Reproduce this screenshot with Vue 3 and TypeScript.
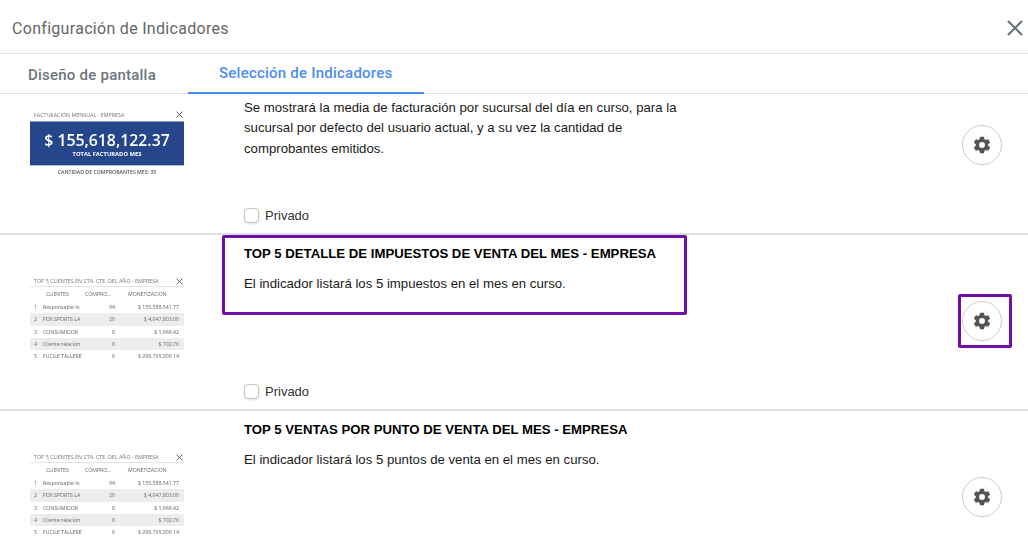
<script setup lang="ts">
interface TableRow {
  name: string
  qty: string
  amount: string
}

interface Indicator {
  id: number
  title: string
  lines: string[]
  kind: 'total' | 'table'
  showPrivado: boolean
}

const tableRows: TableRow[] = [
  { name: 'Responsable In', qty: '94', amount: '$ 155,588,541.77' },
  { name: 'FOX SPORTS LA', qty: '20', amount: '$ 4,047,803.00' },
  { name: 'CONSUMIDOR', qty: '8', amount: '$ 1,968.42' },
  { name: 'Cliente relacion', qty: '8', amount: '$ 702.76' },
  { name: 'FUCILE TALLERE', qty: '6', amount: '$ 298,769,309.14' }
]

// el titulo del primero queda fuera de la zona visible
const indicators: Indicator[] = [
  {
    id: 1,
    title: '',
    lines: [
      'Se mostrará la media de facturación por sucursal del día en curso, para la',
      'sucursal por defecto del usuario actual, y a su vez la cantidad de',
      'comprobantes emitidos.'
    ],
    kind: 'total',
    showPrivado: true
  },
  {
    id: 2,
    title: 'TOP 5 DETALLE DE IMPUESTOS DE VENTA DEL MES - EMPRESA',
    lines: ['El indicador listará los 5 impuestos en el mes en curso.'],
    kind: 'table',
    showPrivado: true
  },
  {
    id: 3,
    title: 'TOP 5 VENTAS POR PUNTO DE VENTA DEL MES - EMPRESA',
    lines: ['El indicador listará los 5 puntos de venta en el mes en curso.'],
    kind: 'table',
    showPrivado: false
  }
]
</script>

<template>
  <div class="modal">
    <header class="modal-header">
      <span class="modal-title">Configuración de Indicadores</span>
      <svg class="close" width="16" height="16" viewBox="0 0 16 16">
        <path d="M1 1 15 15M15 1 1 15" stroke="#6c757d" stroke-width="2.2" fill="none" />
      </svg>
    </header>

    <nav class="tabs">
      <div class="tab">Diseño de pantalla</div>
      <div class="tab active">Selección de Indicadores</div>
    </nav>

    <div class="viewport">
      <div class="list">
        <section v-for="item in indicators" :key="item.id" class="row">
          <div class="thumb-col">
            <div v-if="item.kind === 'total'" class="thumb thumb-total">
              <div class="thumb-head">
                <span>FACTURACIÓN MENSUAL - EMPRESA</span>
                <svg width="7" height="7" viewBox="0 0 7 7">
                  <path d="M.5.5l6 6M6.5.5l-6 6" stroke="#666" stroke-width="1" fill="none" />
                </svg>
              </div>
              <div class="total-box">
                <div class="total-value">$ 155,618,122.37</div>
                <div class="total-label">TOTAL FACTURADO MES</div>
              </div>
              <div class="total-foot">CANTIDAD DE COMPROBANTES MES: 35</div>
            </div>
            <div v-else class="thumb thumb-table">
              <div class="thumb-head">
                <span>TOP 5 CLIENTES EN CTA. CTE. DEL AÑO - EMPRESA</span>
                <svg width="7" height="7" viewBox="0 0 7 7">
                  <path d="M.5.5l6 6M6.5.5l-6 6" stroke="#666" stroke-width="1" fill="none" />
                </svg>
              </div>
              <div class="t-row t-titles">
                <span></span><span class="t-clients">CLIENTES</span><span>COMPRO...</span><span class="t-money">MONETIZACION</span>
              </div>
              <div v-for="(r, i) in tableRows" :key="r.name" class="t-row" :class="{ shaded: i % 2 === 1 }">
                <span>{{ i + 1 }}</span>
                <span class="t-name">{{ r.name }}</span>
                <span class="t-qty">{{ r.qty }}</span>
                <span class="t-amount">{{ r.amount }}</span>
              </div>
            </div>
          </div>

          <div class="body-col">
            <h3 class="title">{{ item.title }}</h3>
            <p class="desc">
              <template v-for="line in item.lines" :key="line">{{ line }}<br /></template>
            </p>
            <label v-if="item.showPrivado" class="privado">
              <span class="check"></span>
              Privado
            </label>
          </div>

          <div class="gear-col">
            <button class="gear" type="button">
              <svg width="20" height="20" viewBox="0 0 24 24">
                <path
                  fill="#555"
                  d="M19.43 12.98c.04-.32.07-.64.07-.98s-.03-.66-.07-.98l2.11-1.65c.19-.15.24-.42.12-.64l-2-3.46c-.12-.22-.39-.3-.61-.22l-2.49 1c-.52-.4-1.08-.73-1.69-.98l-.38-2.65A.488.488 0 0 0 14 2h-4c-.25 0-.46.18-.49.42l-.38 2.65c-.61.25-1.17.59-1.69.98l-2.49-1a.566.566 0 0 0-.61.22l-2 3.46c-.13.22-.07.49.12.64l2.11 1.65c-.04.32-.07.65-.07.98s.03.66.07.98l-2.11 1.65c-.19.15-.24.42-.12.64l2 3.46c.12.22.39.3.61.22l2.49-1c.52.4 1.08.73 1.69.98l.38 2.65c.03.24.24.42.49.42h4c.25 0 .46-.18.49-.42l.38-2.65c.61-.25 1.17-.59 1.69-.98l2.49 1c.23.09.49 0 .61-.22l2-3.46c.12-.22.07-.49-.12-.64l-2.11-1.65zM12 15.5A3.5 3.5 0 1 1 12 8.5a3.5 3.5 0 0 1 0 7z"
                />
              </svg>
            </button>
          </div>
        </section>
      </div>

      <!-- marcas de la captura -->
      <div class="mark mark-text"></div>
      <div class="mark mark-gear"></div>
    </div>
  </div>
</template>

<style>
html,
body {
  background: #fff;
  overflow: hidden;
}
</style>

<style scoped>
.modal {
  width: 1028px;
  height: 554px;
  display: flex;
  flex-direction: column;
  background: #fff;
  overflow: hidden;
}

.modal-header {
  border-bottom: 1px solid #e4e4e4;
  display: flex;
  align-items: center;
  justify-content: space-between;
  padding: 3px 5px 0 12px;
  height: 50px;
  flex: none;
}

.modal-title {
  font-family: Roboto, sans-serif;
  font-size: 16px;
  letter-spacing: 0.3px;
  color: #666;
}

.tabs {
  height: 39px;
  flex: none;
  display: flex;
  border-bottom: 1px solid #e0e0e0;
}

.tab {
  font-family: Roboto, sans-serif;
  font-weight: 500;
  font-size: 15px;
  letter-spacing: 0.23px;
  color: #6c757d;
  padding: 12px 32px 0 28px;
}

.tab.active {
  color: #4c8df5;
  padding: 10px 32px 0 31px;
  border-bottom: 2px solid #4c8df5;
  box-sizing: border-box;
  height: 40px;
}

.viewport {
  position: relative;
  flex: 1;
  overflow: hidden;
}

.list {
  margin-top: -35px;
}

.row {
  height: 174px;
  display: flex;
  border-bottom: 2px solid #dedede;
}

.thumb-col {
  width: 244px;
  flex: none;
  padding-left: 30px;
  box-sizing: border-box;
  display: flex;
  align-items: center;
  padding-bottom: 8px;
}

.thumb {
  width: 154px;
  font-family: 'Open Sans', sans-serif;
  color: #555;
  filter: blur(0.45px);
}

.thumb-total {
  margin-top: 2px;
}

.thumb-head {
  display: flex;
  justify-content: space-between;
  align-items: center;
  height: 12px;
  font-size: 5.35px;
  color: #777;
  padding: 0 1px 0 4px;
}

.total-box {
  background: #25468a;
  color: #fff;
  height: 45px;
  text-align: center;
  border-top: 1px solid #8a9cc0;
  border-bottom: 1px solid #b5c0d8;
  box-sizing: border-box;
  padding-top: 9px;
}

.total-value {
  font-size: 15.8px;
  font-weight: 600;
  line-height: 19px;
}

.total-label {
  font-size: 5.8px;
  font-weight: 700;
  line-height: 8px;
}

.total-foot {
  font-size: 5.2px;
  font-weight: 600;
  text-align: center;
  line-height: 12px;
  color: #555;
}

.thumb-table {
  height: 84px;
  overflow: hidden;
}

.thumb-table .thumb-head {
  height: 10px;
  border-bottom: 1px solid #e4e4e4;
}

.t-row {
  display: grid;
  grid-template-columns: 9px 42px 32px 1fr;
  height: 12.3px;
  line-height: 12.3px;
  font-size: 5.2px;
  padding: 0 5px 0 4px;
  white-space: nowrap;
  color: #666;
}

.t-titles {
  height: 14px;
  line-height: 14px;
}

.t-clients {
  padding-left: 3px;
}

.t-money {
  padding-left: 11px;
}

.t-name {
  overflow: hidden;
  padding-right: 3px;
}

.shaded {
  background: #eceeee;
}

.t-qty {
  text-align: right;
  padding-right: 2px;
}

.t-amount {
  text-align: right;
}

.body-col {
  flex: 1;
  position: relative;
  font-family: 'Liberation Sans', Arial, sans-serif;
  padding-top: 11px;
}

.title {
  margin: 0;
  height: 15px;
  font-size: 13.2px;
  line-height: 15px;
  font-weight: 700;
  color: #000;
}

.desc {
  margin: 12.8px 0 0;
  font-size: 13.2px;
  line-height: 20.5px;
  color: #1a1a1a;
}

.privado {
  position: absolute;
  left: 0;
  top: 149px;
  display: flex;
  align-items: center;
  gap: 6px;
  font-size: 13px;
  color: #333;
}

.check {
  width: 15px;
  height: 15px;
  box-sizing: border-box;
  border: 1px solid #c4c4c4;
  border-radius: 4px;
  background: #fff;
  box-shadow: 0 1px 2px rgba(0, 0, 0, 0.12);
}

.gear-col {
  width: 66px;
  flex: none;
  display: flex;
  align-items: center;
  padding-bottom: 3px;
  box-sizing: border-box;
}

.gear {
  width: 40px;
  height: 40px;
  padding: 0;
  border: 1px solid #ccc;
  border-radius: 50%;
  background: #fff;
  display: flex;
  align-items: center;
  justify-content: center;
}

.mark {
  position: absolute;
  border: 3px solid #6f0fa8;
  box-sizing: border-box;
  border-radius: 2px;
}

.mark-text {
  left: 222px;
  top: 140.5px;
  width: 465px;
  height: 80px;
}

.mark-gear {
  left: 958px;
  top: 200px;
  width: 54px;
  height: 54px;
}
</style>
